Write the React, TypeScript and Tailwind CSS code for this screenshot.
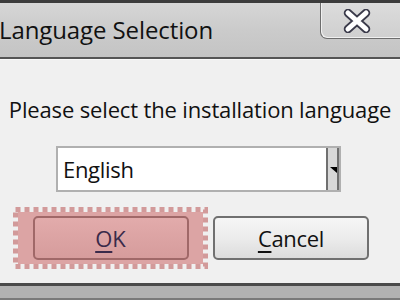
import React from "react";

export default function App() {
  const font = { fontFamily: '"Open Sans", "Liberation Sans", sans-serif' };
  return (
    <div className="w-[400px] h-[300px] overflow-hidden bg-[#f0f0f0] flex flex-col" style={font}>
      {/* Title bar */}
      <div className="h-[60px] shrink-0 flex flex-col">
        <div className="h-[3px] bg-[#3c3c3c]" />
        <div className="flex-1 relative bg-gradient-to-b from-[#d6d6d6] via-[#cbcbcb] to-[#c4c4c4] flex items-start">
          <div className="pt-[12px] text-[24px] leading-[30px] text-[#111] tracking-[-0.1px] -ml-[1px]">
            Language Selection
          </div>
          <div className="absolute right-[-8px] top-0 w-[88px] h-[36px] rounded-bl-[7px] border border-t-0 border-[#6d6d6d] bg-gradient-to-b from-[#dcdcdc] to-[#cfcfcf] shadow-[inset_1px_-1px_0_#f0f0f0] flex items-center justify-center pr-[14px]">
            <svg width="30" height="24" viewBox="0 0 30 24">
              <path d="M6 4 L24 20 M24 4 L6 20" stroke="#3a3a4a" strokeWidth="8.5" strokeLinecap="round" />
              <path d="M6 4 L24 20 M24 4 L6 20" stroke="#ffffff" strokeWidth="5" strokeLinecap="round" />
            </svg>
          </div>
        </div>
        <div className="h-[2px] bg-[#555]" />
        <div className="h-[1px] bg-[#fafafa]" />
      </div>

      {/* Body */}
      <div className="flex-1 flex flex-col items-center">
        <div className="mt-[35px] text-[22px] leading-[28px] text-[#111] tracking-[-0.15px] pl-[0px]">
          Please select the installation language
        </div>
        <div className="mt-[23px] ml-[-3px] w-[285px] h-[46px] border-2 border-[#b0b0b0] bg-white flex items-stretch">
          <div className="flex-1 flex items-center pl-[5px] text-[22px] text-[#111] tracking-[-0.3px]">English</div>
          <div className="w-[13px] border-x-2 border-[#707070] bg-[#d8d8d8] flex items-center justify-center">
            <svg width="12" height="10" viewBox="0 0 12 10" className="ml-[2px] mt-[2px]">
              <path d="M0 0 L12 0 L12 10 Z" fill="#000" />
            </svg>
          </div>
        </div>

        {/* Buttons */}
        <div className="mt-[15px] w-full flex items-center pl-[13px] gap-[5px]">
          <div className="relative w-[195px] h-[62px] p-[4px] flex items-center justify-center">
            <svg className="absolute inset-0" width="195" height="62" viewBox="0 0 195 62">
              <rect x="0" y="0" width="195" height="62" fill="#dba3a3" opacity="0" />
              <rect x="2.5" y="2.5" width="190" height="57" fill="none" stroke="#d29a9a" strokeWidth="5" strokeDasharray="5 4" />
              <rect x="5" y="5" width="185" height="52" fill="#dca4a4" />
            </svg>
            <div className="relative w-[156px] h-[44px] rounded-[5px] border-2 border-[#a06868] bg-gradient-to-b from-[#e2abab] to-[#d69c9c] flex items-center justify-center text-[22px] text-[#3a2a4a]">
              <span><span className="underline underline-offset-[4px] decoration-2">O</span>K</span>
            </div>
          </div>
          <div className="w-[156px] h-[44px] rounded-[5px] border-2 border-[#707070] bg-gradient-to-b from-[#f6f6f6] via-[#ececec] to-[#dcdcdc] flex items-center justify-center text-[22px] text-[#111] tracking-[-0.3px]">
            <span><span className="underline underline-offset-[4px] decoration-2">C</span>ancel</span>
          </div>
        </div>
      </div>

      {/* Bottom */}
      <div className="h-[17px] shrink-0 flex flex-col">
        <div className="h-[3px] bg-[#4a4a4a]" />
        <div className="flex-1 bg-[#b2b2b2]" />
        <div className="h-[2px] bg-[#7a7a7a]" />
      </div>
    </div>
  );
}
